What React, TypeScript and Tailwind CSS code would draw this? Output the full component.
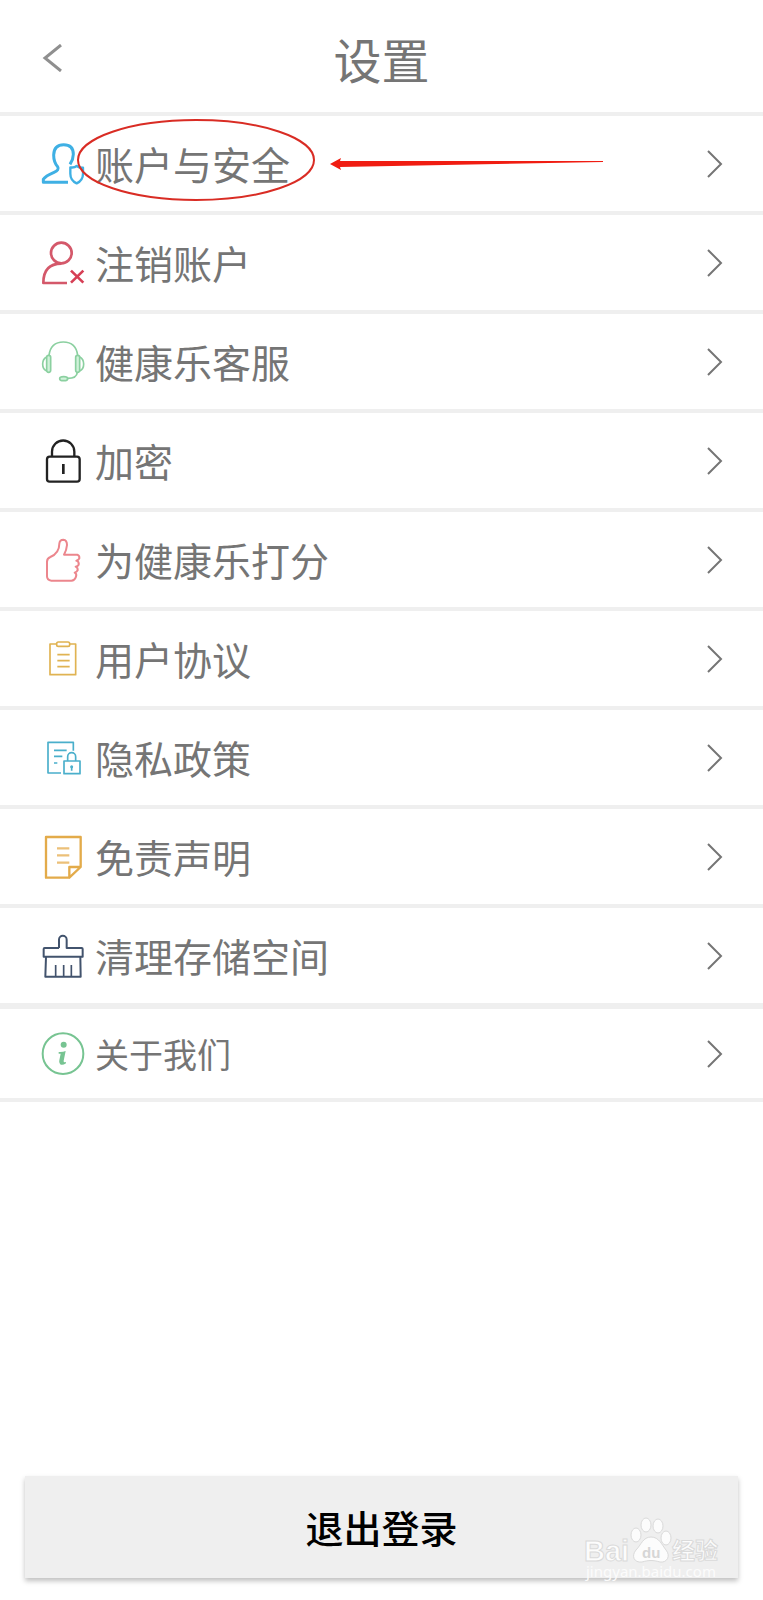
import type { ReactNode } from 'react';
import clsx from 'clsx';

type Item = {
  label: string;
  icon: ReactNode;
  marked?: boolean;
};

function Icon({ color, width = 6, children }: { color: string; width?: number; children: ReactNode }) {
  return (
    <svg
      viewBox="0 0 126 126"
      className="size-[42px] shrink-0 overflow-visible"
      fill="none"
      stroke={color}
      strokeWidth={width}
      strokeLinejoin="round"
      aria-hidden="true"
    >
      {children}
    </svg>
  );
}

const items: Item[] = [
  {
    label: '账户与安全',
    marked: true,
    icon: (
      <Icon color="#3fb0e4" width={9}>
        <path d="M78 118H4V109Q10 99 36 88Q53 81 47 71Q35 58 35 36Q36 5 65 5Q94 5 94 34Q94 49 84 64" />
        <path d="M85 73Q97 75 104 69Q112 75 123 74V92Q123 112 104 121Q85 112 85 92Z" strokeWidth="7" />
      </Icon>
    ),
  },
  {
    label: '注销账户',
    icon: (
      <Icon color="#d4586a" width={8}>
        <circle cx="58" cy="33" r="31" />
        <path d="M75 123H4Q4 65 58 65" />
        <path d="M87 86L124 122M124 86L87 122" stroke="#d63f55" />
      </Icon>
    ),
  },
  {
    label: '健康乐客服',
    icon: (
      <Icon color="#8bd0a0" width={5}>
        <path d="M21 43Q26 3 64 3Q102 3 107 43" />
        <rect x="14" y="43" width="12" height="51" rx="6" fill="#d0f2da" />
        <rect x="101" y="43" width="12" height="51" rx="6" fill="#d0f2da" />
        <path d="M14 48Q2 54 2 69Q2 85 14 90M113 48Q125 54 125 69Q125 85 113 90" />
        <path d="M77 112Q104 112 106 94" />
        <ellipse cx="65" cy="113" rx="12" ry="6" fill="#d0f2da" />
      </Icon>
    ),
  },
  {
    label: '加密',
    icon: (
      <Icon color="#222222" width={7}>
        <rect x="15" y="50" width="98" height="75" rx="8" />
        <path d="M30 50V35A33 33 0 0 1 97 35V50" />
        <path d="M64 72V102" strokeWidth="8" />
      </Icon>
    ),
  },
  {
    label: '为健康乐打分',
    icon: (
      <Icon color="#ec868d">
        <path d="M25 54Q52 42 52 14Q53 2 64 2Q75 3 75 18Q74 32 66 47H106Q113 49 112 58Q110 63 103 65Q112 68 110 77Q107 82 101 83Q108 86 107 94Q104 99 98 101Q105 104 102 113Q98 125 88 125H28Q15 124 15 112V68Q15 58 25 54Z" />
      </Icon>
    ),
  },
  {
    label: '用户协议',
    icon: (
      <Icon color="#e0b352" width={5}>
        <path d="M44 18H24V110H101V18H83" />
        <rect x="44" y="12" width="39" height="13" rx="5" />
        <path d="M46 50H83M46 68H83M46 86H83" />
      </Icon>
    ),
  },
  {
    label: '隐私政策',
    icon: (
      <Icon color="#4aafcb" width={5}>
        <path d="M57 108H18V16H94V41" />
        <path d="M36 40H74M36 58H61M36 78H46" />
        <rect x="66" y="72" width="48" height="38" />
        <path d="M77 72V59A12 12 0 0 1 101 59V72M89 88V101" />
        <circle cx="89" cy="89" r="2" />
      </Icon>
    ),
  },
  {
    label: '免责声明',
    icon: (
      <Icon color="#e3ab4a" width={7}>
        <path d="M82 125H12V3H116V93L82 125V93H116" />
        <path d="M45 37H82M45 58H82M45 80H82" stroke="#ecc078" />
      </Icon>
    ),
  },
  {
    label: '清理存储空间',
    icon: (
      <Icon color="#42536d" width={6}>
        <path d="M51 39H8Q5 39 5 42V65H122V42Q122 39 119 39H74V14A11 11 0 0 0 51 14V39" />
        <path d="M12 65L10 125H116L115 65" />
        <path d="M41 90V125M65 90V125M88 90V125" strokeWidth="5" />
      </Icon>
    ),
  },
  {
    label: '关于我们',
    icon: (
      <Icon color="#77c492" width={6}>
        <circle cx="63" cy="62" r="61" />
        <circle cx="65" cy="35" r="9" fill="#77c492" stroke="none" />
        <path d="M50 57Q62 58 71 54L65 83Q64 90 72 87V91Q60 99 54 93Q50 89 52 82L56 62H50Z" fill="#77c492" stroke="none" />
      </Icon>
    ),
  },
];

function Chevron() {
  return (
    <svg viewBox="0 0 16 28" className="ml-auto h-7 w-4 shrink-0" fill="none" stroke="#757575" strokeWidth="2" aria-hidden="true">
      <path d="M1 1L14 14L1 27" />
    </svg>
  );
}

// red circle and arrow pointing at the highlighted row
function Marker() {
  return (
    <svg viewBox="0 0 620 95" className="pointer-events-none absolute top-0 left-0 h-[95px] w-[620px]" aria-hidden="true">
      <ellipse cx="196" cy="44" rx="118" ry="40" fill="none" stroke="#d92c24" strokeWidth="2" />
      <path d="M330 48L341 42L340 45L603 45V46L340 51L341 54Z" fill="#f01d12" />
    </svg>
  );
}

function Watermark() {
  return (
    <svg
      viewBox="0 0 144 76"
      className="pointer-events-none absolute right-3 -bottom-1.5 h-[76px] w-36"
      fill="#fcfcfc"
      stroke="#dadada"
      strokeWidth="1"
      aria-hidden="true"
    >
      <text x="2" y="53" fontSize="29" fontWeight="700" fontFamily="'Liberation Sans', sans-serif">Bai</text>
      <path d="M69 29C77 29 80 37 84 42C89 48 85 55 78 54C71 52 67 52 60 54C52 55 49 48 54 42C59 37 61 29 69 29Z" />
      <ellipse cx="54" cy="27" rx="5" ry="7" />
      <ellipse cx="64" cy="17" rx="5" ry="7" />
      <ellipse cx="76" cy="18" rx="5" ry="7" />
      <ellipse cx="84" cy="30" rx="5" ry="7" />
      <text x="60" y="50" fontSize="15" fontWeight="700" fill="#d6d6d6" stroke="none" fontFamily="'Liberation Sans', sans-serif">du</text>
      <text x="90" y="51" fontSize="23" fontWeight="700" fontFamily="'Noto Sans CJK SC', sans-serif">经验</text>
      <text x="4" y="69" fontSize="15" strokeWidth="0" fontFamily="'Noto Sans', sans-serif">jingyan.baidu.com</text>
    </svg>
  );
}

export default function App() {
  return (
    <div className="flex min-h-screen flex-col bg-white font-['Noto_Sans_CJK_SC',sans-serif] text-[#757575]">
      <header className="grid grid-cols-[1fr_auto_1fr] items-center border-b-4 border-[#efefef] px-[42px] pt-[34px] pb-[30px]">
        <button type="button" aria-label="返回" className="justify-self-start">
          <svg viewBox="0 0 20 28" className="h-7 w-5" fill="none" stroke="#8f8f8f" strokeWidth="3">
            <path d="M19 1L3 14L19 27" />
          </svg>
        </button>
        <h1 className="text-5xl leading-[48px]">设置</h1>
      </header>

      <ul>
        {items.map((item, i) => {
          const last = i === items.length - 1;
          return (
            <li
              key={item.label}
              className={clsx('relative border-[#efefef]', i === items.length - 2 ? 'border-b-6' : 'border-b-4')}
            >
              <button
                type="button"
                className={clsx(
                  'flex w-full items-center gap-[11px] pr-10 pl-[42px] text-left leading-[43px]',
                  last ? 'py-[23px] text-[34px]' : 'py-[26px] text-[39px]',
                )}
              >
                {item.icon}
                <span>{item.label}</span>
                <Chevron />
              </button>
              {item.marked && <Marker />}
            </li>
          );
        })}
      </ul>

      <footer className="mt-auto px-[25px] pb-[22px]">
        <div className="relative">
          <button
            type="button"
            className="w-full bg-[#efefef] py-[29px] text-[38px] leading-[44px] font-medium text-black shadow-[0_3px_5px_rgba(0,0,0,0.25)]"
          >
            退出登录
          </button>
          <Watermark />
        </div>
      </footer>
    </div>
  );
}
